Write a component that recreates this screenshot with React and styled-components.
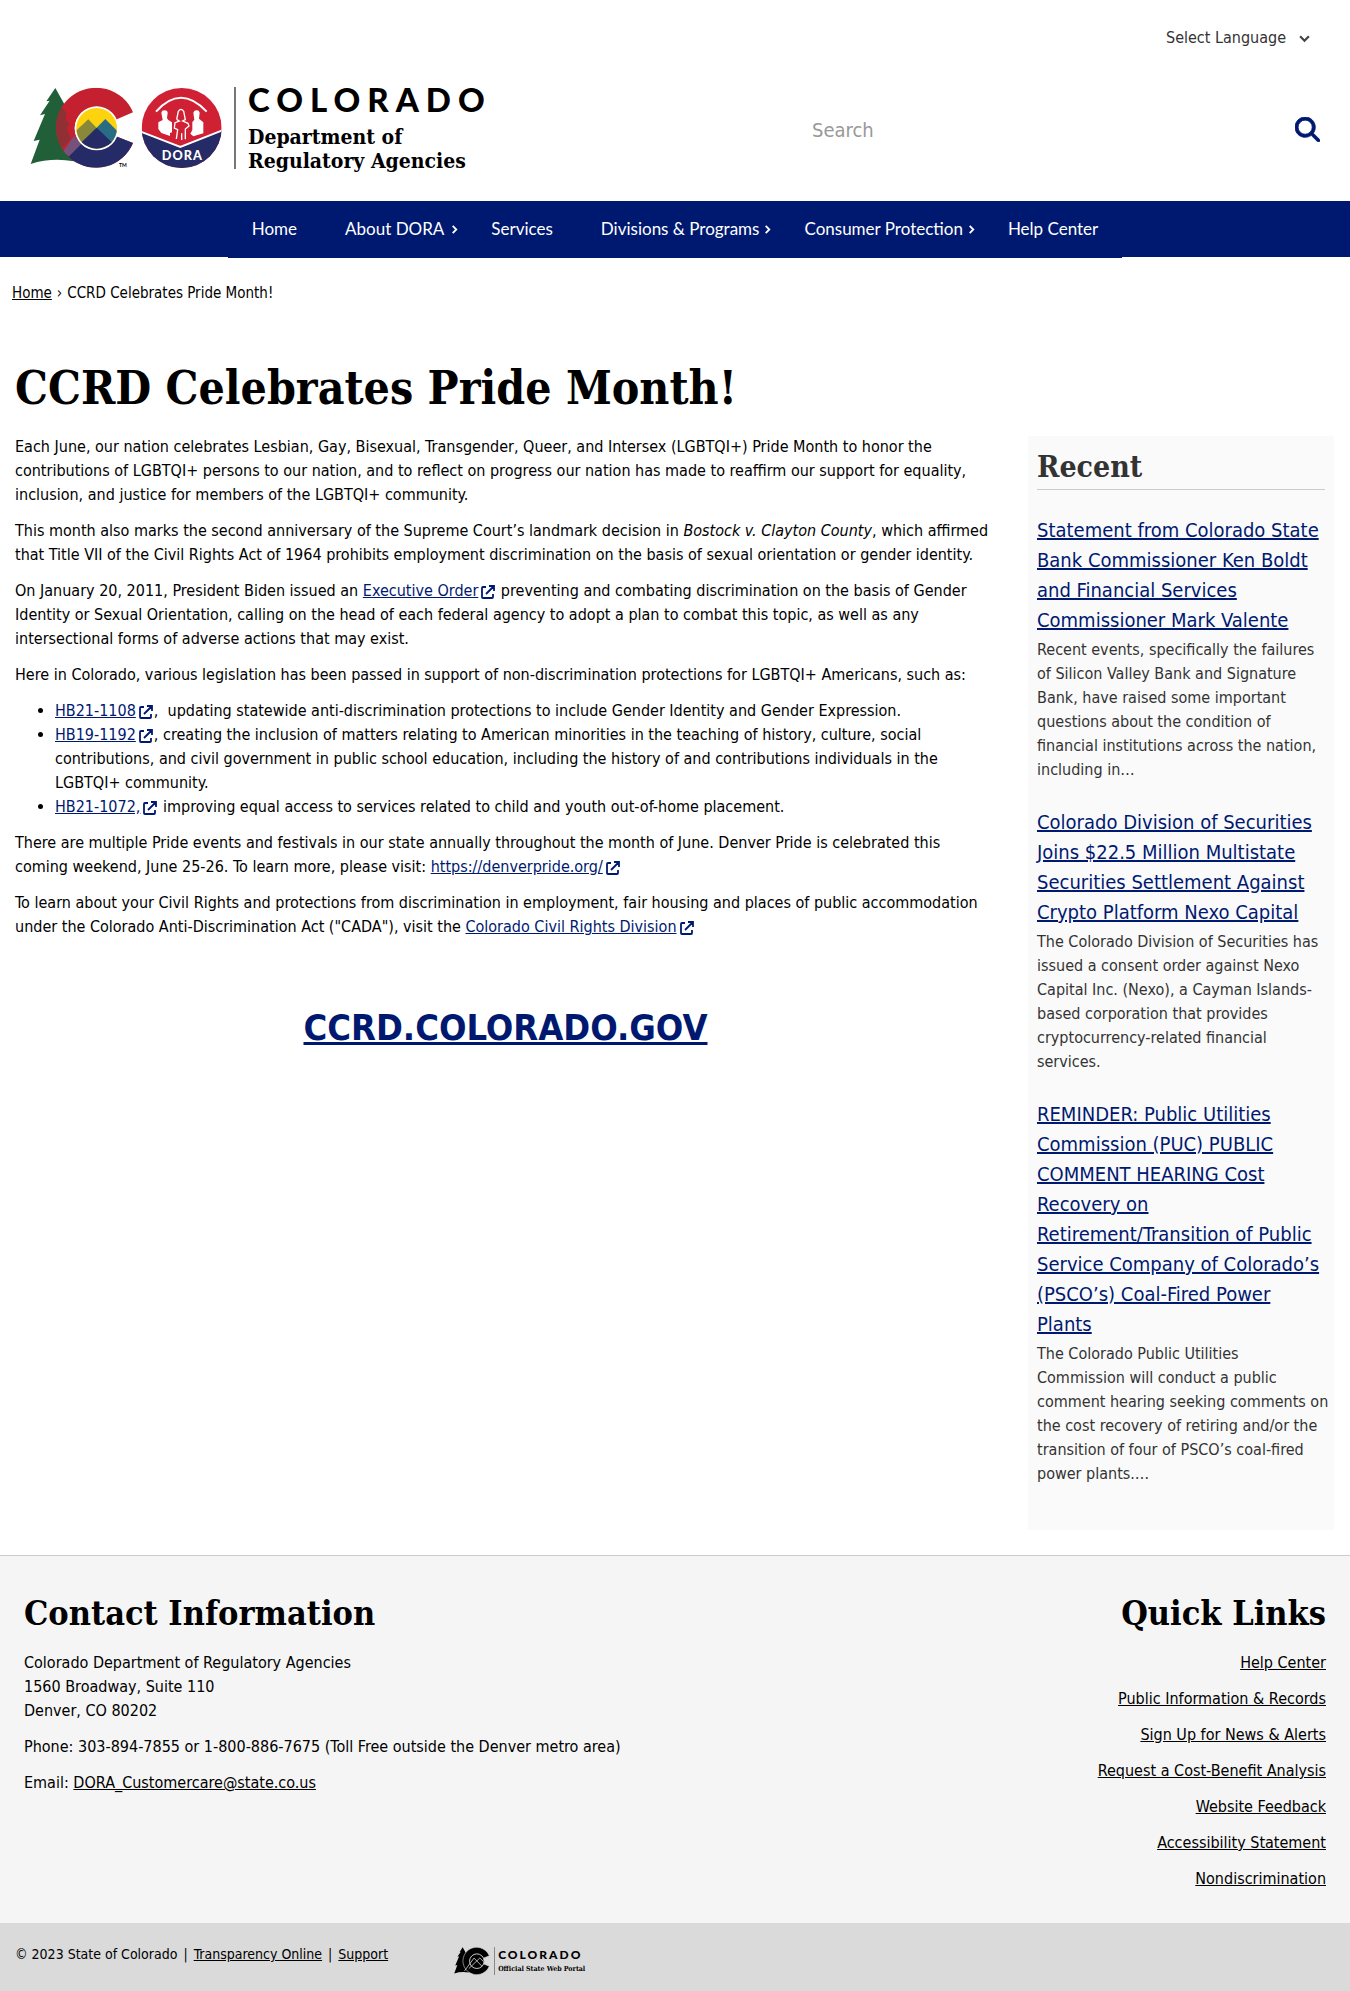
import React from "react";
import styled, { createGlobalStyle, css } from "styled-components";
import { FaMagnifyingGlass } from "react-icons/fa6";

const sans = `"DejaVu Sans Condensed", "DejaVu Sans", sans-serif`;
const display = `Lato, "Liberation Sans", sans-serif`;
const slab = `"DejaVu Serif Condensed", "DejaVu Serif", serif`;
const navy = "#001970";

const Global = createGlobalStyle`
  * { box-sizing: border-box; }
  body { margin: 0; background: #fff; color: #000; font: 16px/24px ${sans}; }
  h1, h2, h3, p, ul { margin: 0; padding: 0; }
  h1, h2 { font-family: ${slab}; font-weight: 700; }
`;

const Header = styled.header`
  display: flex;
  flex-direction: column;
  padding-bottom: 29px;
`;
const LanguageRow = styled.div`
  display: flex;
  justify-content: flex-end;
  align-items: center;
  gap: 12px;
  height: 50px;
  padding: 26px 40px 0 0;
  color: #333;
`;
const LanguageSelect = styled.select`
  appearance: none;
  border: 0;
  padding: 0;
  background: transparent;
  color: inherit;
  font: inherit;
`;
const BrandRow = styled.div`
  display: grid;
  grid-template-columns: 3fr 2fr;
  align-items: start;
  padding: 37px 30px 0;
`;
const Brand = styled.a`
  display: flex;
  color: #000;
  text-decoration: none;
`;
const BrandText = styled.span`
  display: flex;
  flex-direction: column;
  margin-left: 4px;
  padding-left: 12px;
  border-left: 2px solid #777;
  height: 82px;
  font: 700 21px/24px ${slab};
`;
const BrandName = styled.span`
  font: 900 33px/25px ${display};
  letter-spacing: 7px;
  margin-bottom: 13px;
`;
const SearchForm = styled.form`
  display: flex;
  justify-content: space-between;
  align-items: center;
  height: 85px;
`;
const SearchInput = styled.input`
  flex: 1;
  min-width: 0;
  border: 0;
  outline: 0;
  padding: 0 8px;
  color: #333;
  font: 20px/30px ${sans};
  &::placeholder { color: #999; opacity: 1; }
`;
const SearchButton = styled.button`
  display: flex;
  border: 0;
  padding: 0;
  background: none;
  color: ${navy};
  font-size: 25px;
  svg { stroke: currentColor; stroke-width: 16px; }
`;

const NavBar = styled.nav`
  display: flex;
  justify-content: center;
  background: ${navy};
  height: 56px;
`;
const NavList = styled.ul`
  display: flex;
  list-style: none;
  height: 57px;
  border-bottom: 1px solid ${navy};
`;
const NavLink = styled.a`
  display: flex;
  align-items: center;
  gap: ${(p) => p.$gap || 0}px;
  height: 56px;
  padding: 0 ${(p) => (p.$menu ? 8 : 24)}px 0 24px;
  color: #fff;
  font-family: ${display};
  font-size: 17px;
  text-decoration: none;
`;

const Crumbs = styled.nav`
  display: flex;
  gap: 5px;
  padding: 24px 12px 0;
  font-size: 15px;
  a { color: #000; }
`;

const Page = styled.div`
  display: grid;
  grid-template-columns: minmax(0, 1fr) 306px;
  column-gap: 32px;
  padding: 56px 16px 25px 15px;
`;
const PageTitle = styled.h1`
  grid-column: 1 / -1;
  font-size: 46px;
  line-height: 54px;
  margin-bottom: 20px;
`;
const Article = styled.main`
  p, ul { margin-bottom: 12px; }
  ul { padding-left: 40px; }
  a { color: ${navy}; }
`;
const ExternalSvg = styled.svg`
  width: 14px;
  height: 14px;
  margin: 0 1px 0 3px;
  vertical-align: -3px;
  color: ${navy};
`;
const BigLink = styled.h2`
  && { font: 700 36px/50px ${sans}; }
  margin-top: 64px;
  text-align: center;
  a { text-decoration-thickness: 3px; }
`;

const Sidebar = styled.aside`
  margin-top: 1px;
  padding: 16px 9px 44px;
  background: #fafafa;
  color: #333;
`;
const SideTitle = styled.h2`
  padding-bottom: 7px;
  border-bottom: 1px solid #ccc;
  font-size: 30px;
  line-height: 30px;
`;
const NewsItem = styled.section`
  margin-top: 25px;
`;
const NewsTitle = styled.h3`
  font: 400 20px/30px ${sans};
  margin-bottom: 3px;
  a { color: ${navy}; }
`;
const NewsText = styled.p`
  && { margin-right: -5px; }
`;

const Footer = styled.footer`
  display: flex;
  justify-content: space-between;
  padding: 36px 24px 20px;
  border-top: 1px solid #ccc;
  background: #f5f5f5;
  p { margin-bottom: 12px; }
  a { color: #000; }
`;
const FooterColumn = styled.section`
  ${(p) => p.$end && css`text-align: right;`}
`;
const FooterTitle = styled.h2`
  font-size: 34px;
  line-height: 42px;
  margin-bottom: 17px;
`;
const Legal = styled.div`
  display: flex;
  align-items: flex-start;
  padding: 19px 15px 16px;
  background: #dadada;
  font-size: 14px;
  a { color: #000; }
`;
const LegalText = styled.p`
  display: flex;
  gap: 6px;
  margin-right: 66px;
`;
const Portal = styled.a`
  display: flex;
  padding-top: 5px;
  color: #000;
  text-decoration: none;
`;
const PortalText = styled.span`
  display: flex;
  flex-direction: column;
  margin-left: 4px;
  padding-left: 3px;
  border-left: 1px solid #888;
  height: 28px;
  font: 700 7px/12px ${slab};
`;
const PortalName = styled.span`
  font: 900 12px/16px ${display};
  letter-spacing: 2px;
`;

const External = () => (
  <ExternalSvg viewBox="0 0 14 14" fill="none" stroke="currentColor" strokeWidth="1.800" aria-hidden="true">
    <path d="M5 2H2Q1 2 1 3V12Q1 13 2 13H11Q12 13 12 12V9M8 1H13V6M13 1L5 9" />
  </ExternalSvg>
);
const Chevron = ({ down, size = 9, color = "#fff" }) => (
  <svg width={size} height={size} viewBox="0 0 10 10" fill="none" stroke={color} strokeWidth="2" aria-hidden="true">
    <path d={down ? "M1 3L5 7L9 3" : "M3 1L7 5L3 9"} />
  </svg>
);

const Emblem = () => (
  <svg width="200" height="83" viewBox="90 81 600 249" role="img" aria-label="Colorado DORA">
    <defs>
      <clipPath id="ring"><path d="M399 157A120 120 0 1 0 399 249L340 226A60 60 0 1 1 340 182Z" /></clipPath>
      <clipPath id="core"><circle cx="290" cy="205" r="61" /></clipPath>
      <clipPath id="seal"><circle cx="545" cy="204" r="120" /></clipPath>
    </defs>
    <path fill="#215f38" d="M166 84L200 145L235 300L222 304Q155 292 92 312L119 239L101 243L135 162L120 166L149 122L139 124Z" />
    <g clipPath="url(#ring)">
      <rect x="160" y="80" width="250" height="250" fill="#c4202f" />
      <path d="M160 320L290 203L410 250V330H160Z" fill="#242b66" />
      <path d="M166 120L200 160L196 182L208 190L200 205L212 235L190 262L160 250Z" fill="#8f3035" />
      <path d="M188 276L222 228L246 250L206 290Z" fill="#76527a" />
    </g>
    <circle cx="290" cy="205" r="66" fill="#fff" />
    <g clipPath="url(#core)">
      <rect x="225" y="140" width="130" height="130" fill="#fcd30c" />
      <path d="M225 215L265 178L310 225L270 250H225Z" fill="#89883a" />
      <path d="M275 218L316 177L356 217V255H280Z" fill="#2b6c85" />
      <path d="M220 270L290 203L360 270Z" fill="#242b66" />
    </g>
    <text x="357" y="321" fontFamily="Lato, sans-serif" fontSize="15" fontWeight="700">TM</text>
    <g clipPath="url(#seal)">
      <rect x="425" y="84" width="240" height="240" fill="#cf2034" />
      <path d="M420 214L541 261L670 210V330H420Z" fill="#242b66" />
      <path d="M420 214L541 261L670 210" fill="none" stroke="#fff" strokeWidth="6" />
    </g>
    <path d="M468 155Q542 72 620 155" fill="none" stroke="#fff" strokeWidth="6" />
    <g fill="#fff">
      <path d="M484 158Q485 151 493 151Q502 151 503 158L501 175L505 180L516 187V217L510 219V228L484 219L475 207V187L488 180Z" />
      <path d="M580 158Q582 151 590 151Q598 151 599 158L597 176L610 187V220L580 229L571 221L577 210V186L583 179Z" />
    </g>
    <path d="M530 178L535 154Q543 142 551 154L556 179L548 183L564 190L567 198L556 207V238M530 178L538 183L525 188L523 204L533 209L529 237M545 220V240" fill="none" stroke="#fff" strokeWidth="4" />
    <text x="547" y="300" fill="#fff" textAnchor="middle" fontFamily="Lato, sans-serif" fontSize="38" fontWeight="900" letterSpacing="3">DORA</text>
  </svg>
);
const MonoEmblem = () => (
  <svg width="36" height="28" viewBox="90 81 315 245" role="img" aria-label="Colorado">
    <path d="M166 84L200 145L235 300L222 304Q155 292 92 312L119 239L101 243L135 162L120 166L149 122L139 124Z" />
    <path d="M399 157A120 120 0 1 0 399 249L340 226L340 182Z" stroke="#dadada" strokeWidth="5" />
    <circle cx="290" cy="205" r="64" stroke="#dadada" strokeWidth="8" />
    <path d="M182 290L265 178L335 250M220 270L316 177L350 210" fill="none" stroke="#dadada" strokeWidth="7" />
  </svg>
);

const navItems = [
  { label: "Home" },
  { label: "About DORA", gap: 6 },
  { label: "Services" },
  { label: "Divisions & Programs", gap: 4 },
  { label: "Consumer Protection", gap: 4 },
  { label: "Help Center" },
];
const news = [
  {
    title: "Statement from Colorado State Bank Commissioner Ken Boldt and Financial Services Commissioner Mark Valente",
    text: "Recent events, specifically the failures of Silicon Valley Bank and Signature Bank, have raised some important questions about the condition of financial institutions across the nation, including in…",
  },
  {
    title: "Colorado Division of Securities Joins $22.5 Million Multistate Securities Settlement Against Crypto Platform Nexo Capital",
    text: "The Colorado Division of Securities has issued a consent order against Nexo Capital Inc. (Nexo), a Cayman Islands-based corporation that provides cryptocurrency-related financial services.",
  },
  {
    title: "REMINDER: Public Utilities Commission (PUC) PUBLIC COMMENT HEARING Cost Recovery on Retirement/Transition of Public Service Company of Colorado’s (PSCO’s) Coal-Fired Power Plants",
    text: "The Colorado Public Utilities Commission will conduct a public comment hearing seeking comments on the cost recovery of retiring and/or the transition of four of PSCO’s coal-fired power plants.…",
  },
];
const quickLinks = [
  "Help Center",
  "Public Information & Records",
  "Sign Up for News & Alerts",
  "Request a Cost-Benefit Analysis",
  "Website Feedback",
  "Accessibility Statement",
  "Nondiscrimination",
];

export default function App() {
  return (
    <>
      <Global />
      <Header>
        <LanguageRow>
          <LanguageSelect aria-label="Select Language">
            <option>Select Language</option>
          </LanguageSelect>
          <Chevron down size={11} color="#444" />
        </LanguageRow>
        <BrandRow>
          <Brand href="#">
            <Emblem />
            <BrandText>
              <BrandName>COLORADO</BrandName>
              <span>Department of</span>
              <span>Regulatory Agencies</span>
            </BrandText>
          </Brand>
          <SearchForm role="search">
            <SearchInput type="search" placeholder="Search" aria-label="Search" />
            <SearchButton type="button" aria-label="Search">
              <FaMagnifyingGlass />
            </SearchButton>
          </SearchForm>
        </BrandRow>
      </Header>
      <NavBar aria-label="Main">
        <NavList>
          {navItems.map((item) => (
            <li key={item.label}>
              <NavLink href="#" $gap={item.gap} $menu={Boolean(item.gap)}>
                {item.label}
                {item.gap && <Chevron />}
              </NavLink>
            </li>
          ))}
        </NavList>
      </NavBar>
      <Crumbs aria-label="Breadcrumb">
        <a href="#">Home</a>
        <span>›</span>
        <span>CCRD Celebrates Pride Month!</span>
      </Crumbs>
      <Page>
        <PageTitle>CCRD Celebrates Pride Month!</PageTitle>
        <Article>
          <p>
            Each June, our nation celebrates Lesbian, Gay, Bisexual, Transgender, Queer, and Intersex (LGBTQI+) Pride
            Month to honor the contributions of LGBTQI+ persons to our nation, and to reflect on progress our nation has
            made to reaffirm our support for equality, inclusion, and justice for members of the LGBTQI+ community.
          </p>
          <p>
            This month also marks the second anniversary of the Supreme Court’s landmark decision in{" "}
            <em>Bostock v. Clayton County</em>, which affirmed that Title VII of the Civil Rights Act of 1964 prohibits
            employment discrimination on the basis of sexual orientation or gender identity.
          </p>
          <p>
            On January 20, 2011, President Biden issued an <a href="#">Executive Order</a>
            <External /> preventing and combating discrimination on the basis of Gender Identity or Sexual Orientation,
            calling on the head of each federal agency to adopt a plan to combat this topic, as well as any
            intersectional forms of adverse actions that may exist.
          </p>
          <p>
            Here in Colorado, various legislation has been passed in support of non-discrimination protections for
            LGBTQI+ Americans, such as:
          </p>
          <ul>
            <li>
              <a href="#">HB21-1108</a>
              <External />,&nbsp; updating statewide anti-discrimination protections to include Gender Identity and Gender
              Expression.
            </li>
            <li>
              <a href="#">HB19-1192</a>
              <External />, creating the inclusion of matters relating to American minorities in the teaching of
              history, culture, social contributions, and civil government in public school education, including the
              history of and contributions individuals in the LGBTQI+ community.
            </li>
            <li>
              <a href="#">HB21-1072,</a>
              <External /> improving equal access to services related to child and youth out-of-home placement.
            </li>
          </ul>
          <p>
            There are multiple Pride events and festivals in our state annually throughout the month of June. Denver
            Pride is celebrated this coming weekend, June 25-26. To learn more, please visit:{" "}
            <a href="#">https://denverpride.org/</a>
            <External />
          </p>
          <p>
            To learn about your Civil Rights and protections from discrimination in employment, fair housing and places
            of public accommodation under the Colorado Anti-Discrimination Act ("CADA"), visit the{" "}
            <a href="#">Colorado Civil Rights Division</a>
            <External />
          </p>
          <BigLink>
            <a href="#">CCRD.COLORADO.GOV</a>
          </BigLink>
        </Article>
        <Sidebar>
          <SideTitle>Recent</SideTitle>
          {news.map((item) => (
            <NewsItem key={item.title}>
              <NewsTitle>
                <a href="#">{item.title}</a>
              </NewsTitle>
              <NewsText>{item.text}</NewsText>
            </NewsItem>
          ))}
        </Sidebar>
      </Page>
      <Footer>
        <FooterColumn>
          <FooterTitle>Contact Information</FooterTitle>
          <p>
            Colorado Department of Regulatory Agencies
            <br />
            1560 Broadway, Suite 110
            <br />
            Denver, CO 80202
          </p>
          <p>Phone: 303-894-7855 or 1-800-886-7675 (Toll Free outside the Denver metro area)</p>
          <p>
            Email: <a href="#">DORA_Customercare@state.co.us</a>
          </p>
        </FooterColumn>
        <FooterColumn $end>
          <FooterTitle>Quick Links</FooterTitle>
          {quickLinks.map((label) => (
            <p key={label}>
              <a href="#">{label}</a>
            </p>
          ))}
        </FooterColumn>
      </Footer>
      <Legal>
        <LegalText>
          <span>© 2023 State of Colorado</span>
          <span>|</span>
          <a href="#">Transparency Online</a>
          <span>|</span>
          <a href="#">Support</a>
        </LegalText>
        <Portal href="#">
          <MonoEmblem />
          <PortalText>
            <PortalName>COLORADO</PortalName>
            <span>Official State Web Portal</span>
          </PortalText>
        </Portal>
      </Legal>
    </>
  );
}
